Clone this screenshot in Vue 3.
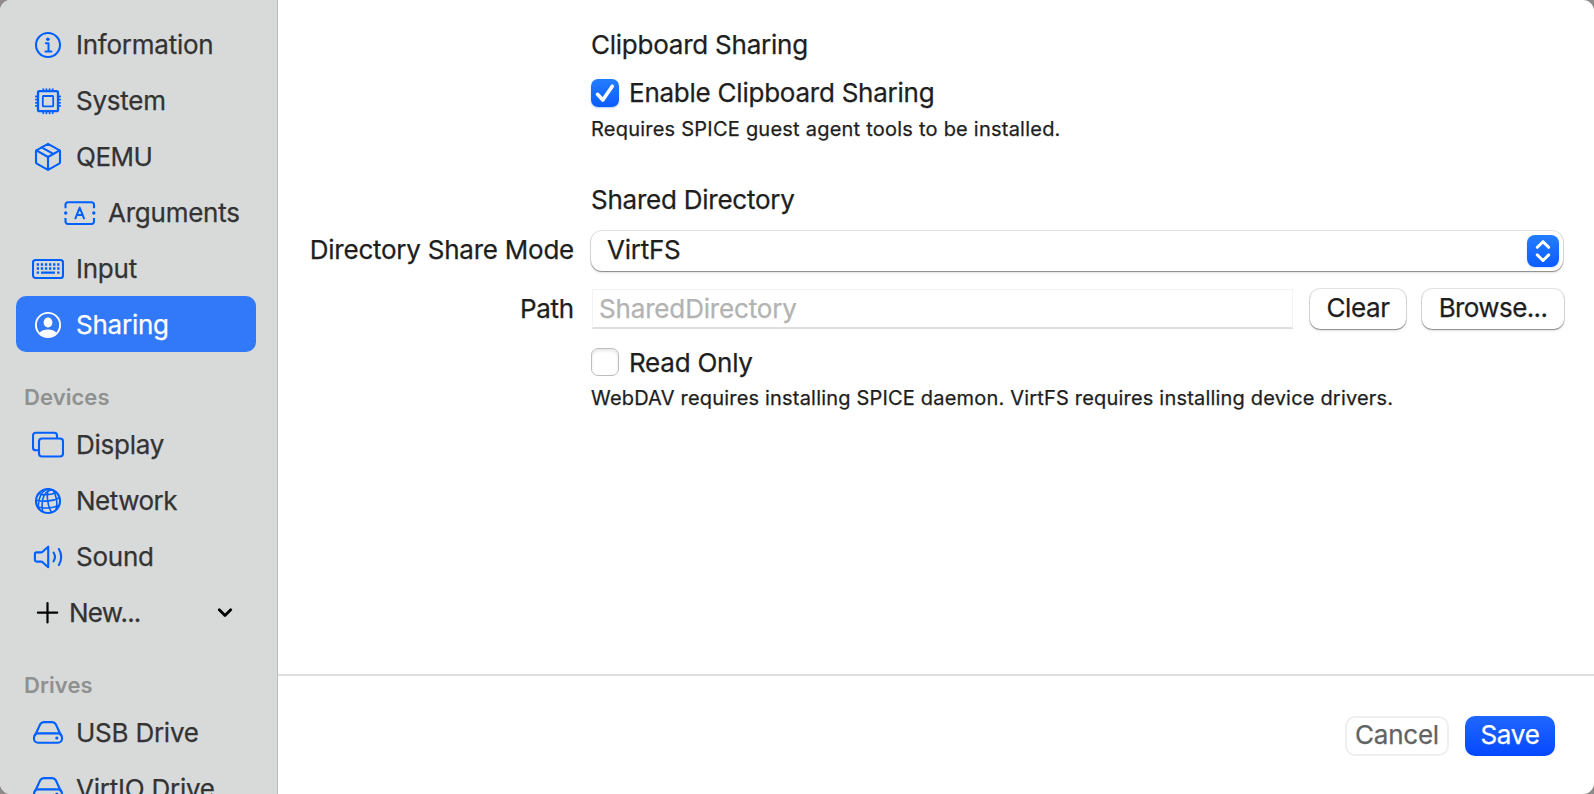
<script setup>
const main = [
  { id: 'information', label: 'Information' },
  { id: 'system', label: 'System' },
  { id: 'qemu', label: 'QEMU' },
  { id: 'arguments', label: 'Arguments', nested: true },
  { id: 'input', label: 'Input' },
  { id: 'sharing', label: 'Sharing', active: true },
]
const devices = [
  { id: 'display', label: 'Display' },
  { id: 'network', label: 'Network' },
  { id: 'sound', label: 'Sound' },
  { id: 'new', label: 'New...' },
]
const drives = [
  { id: 'usb', label: 'USB Drive' },
  { id: 'virtio', label: 'VirtIO Drive' },
]
const groups = [
  { id: 'main', items: main },
  { id: 'devices', title: 'Devices', items: devices },
  { id: 'drives', title: 'Drives', items: drives },
]
</script>

<template>
  <div class="backdrop">
    <div class="window">
      <aside class="sidebar">
        <section v-for="g in groups" :key="g.id" class="group" :class="'g-' + g.id">
          <h2 v-if="g.title" class="group-title"><span>{{ g.title }}</span></h2>
          <div
            v-for="item in g.items"
            :key="item.id"
            class="item"
            :class="{ active: item.active, nested: item.nested, add: item.id === 'new' }"
          >
            <svg class="icon" viewBox="0 0 32 32" fill="none" stroke="currentColor" stroke-width="2.1" stroke-linecap="round" stroke-linejoin="round">
              <template v-if="item.id === 'information'">
                <circle cx="16" cy="16" r="12" />
                <circle cx="15.9" cy="10.2" r="1.8" fill="currentColor" stroke="none" />
                <path d="M13.8 14.200h2.700v8M13.400 22.400h6" stroke-width="2" />
              </template>
              <template v-else-if="item.id === 'system'">
                <rect x="6" y="6.200" width="20" height="20" rx="1.500" stroke-width="2.300" />
                <rect x="10.800" y="11" width="10.400" height="10.400" rx=".6" stroke-width="1.800" />
                <path d="M11.300 6V4.100M14.400 6V4.100M17.600 6V4.100M20.700 6V4.100M11.300 26.400v1.900M14.400 26.400v1.900M17.600 26.400v1.900M20.700 26.400v1.900M6 11.500H3.900M6 14.600H3.900M6 17.800H3.900M6 20.900H3.900M26 11.500h2.100M26 14.600h2.100M26 17.800h2.100M26 20.900h2.100" stroke-width="1.800" />
              </template>
              <template v-else-if="item.id === 'qemu'">
                <path d="M16 2.900 27.200 9.100a1.200 1.200 0 0 1 .8 1.100v11.200a1.400 1.400 0 0 1-.8 1.200L16 28.900 4.800 22.600a1.400 1.400 0 0 1-.8-1.200V10.200a1.200 1.200 0 0 1 .8-1.100Z" />
                <path d="M4.800 9.600 16 16l11.200-6.400M16 16v12.500M9.600 6.400l11.700 6.500" />
              </template>
              <template v-else-if="item.id === 'arguments'">
                <path d="M1.500 11.300V7.600a2.400 2.400 0 0 1 2.400-2.400h23.700A2.400 2.400 0 0 1 30 7.600v3.700M1.500 20.900v3.700a2.400 2.400 0 0 0 2.400 2.400h23.700a2.400 2.400 0 0 0 2.400-2.400v-3.700" stroke-linecap="butt" />
                <circle cx="1.700" cy="16" r="1.700" fill="currentColor" stroke="none" />
                <circle cx="29.800" cy="16" r="1.700" fill="currentColor" stroke="none" />
                <path d="M11.400 21.400 15.700 10.600 20 21.400M13 18.100h5.400" stroke-width="2" />
              </template>
              <template v-else-if="item.id === 'input'">
                <rect x="1" y="7" width="30" height="18" rx="2.600" />
                <path d="M4.700 11.500h23.200M4.700 15.500h23.200" stroke-width="2.300" stroke-dasharray="2.300 1.800" stroke-linecap="butt" />
                <path d="M4.700 19.700h2.300M9 19.700h14M25.200 19.700h2.300" stroke-width="2.200" stroke-linecap="butt" />
              </template>
              <template v-else-if="item.id === 'sharing'">
                <circle cx="16" cy="16" r="12.100" stroke-width="1.900" />
                <ellipse cx="16" cy="13.500" rx="4.400" ry="4.900" fill="currentColor" stroke="none" />
                <path d="M7.400 23.900c1.800-2.200 5-3.400 8.600-3.400s6.800 1.200 8.600 3.400A12 12 0 0 1 7.400 23.900Z" fill="currentColor" stroke="none" />
              </template>
              <template v-else-if="item.id === 'display'">
                <path d="M7 21.300H3.700A2.700 2.700 0 0 1 1 18.600V6.400a2.700 2.700 0 0 1 2.700-2.700h18.600A2.700 2.700 0 0 1 25 6.400v2.800" stroke-linecap="butt" />
                <rect x="7" y="9.500" width="24" height="18" rx="3" />
              </template>
              <template v-else-if="item.id === 'network'">
                <circle cx="16" cy="16" r="12" />
                <path d="M6.700 8.500c4.600 2.100 12.700 1.600 17.300-1.300M4 15.200c7.600 1.700 17.500 1 23.500-2.400M5.700 22c6.300 1.500 14.700.9 20.300-1.100M20.700 4.700C13.700 5.200 8.200 12 10.700 26.700M16.600 3.900C14.700 8 14.600 19 19.400 27.200M20.900 4.800c3.800 5.500 4.600 13.700 3.300 19.200M15.700 4C10.300 6 6.300 11.800 6.300 23" stroke-width="1.600" />
              </template>
              <template v-else-if="item.id === 'sound'">
                <path d="M16.200 5.700v20.600L10.300 21a1.500 1.500 0 0 0-1-.4H4.500a1.600 1.600 0 0 1-1.600-1.600v-6a1.600 1.600 0 0 1 1.600-1.600h4.800a1.500 1.500 0 0 0 1-.4Z" />
                <path d="M21.600 11.700c1.600 2.500 1.600 6.100 0 8.600M26.900 8c2.800 4.900 2.800 11.100 0 16" />
              </template>
              <template v-else-if="item.id === 'new'">
                <path d="M15.500 6.100v19.300M5.900 15.700h19.300" stroke-width="2.200" />
              </template>
              <template v-else>
                <path d="M3.100 18.300 8.200 7.300a4 4 0 0 1 3.600-2.200h8.400a4 4 0 0 1 3.600 2.200l5.100 11" />
                <rect x="2" y="16.400" width="28" height="9.400" rx="4" />
                <circle cx="24.800" cy="21" r="1.600" fill="currentColor" stroke="none" />
              </template>
            </svg>
            <span class="label" :class="'t-' + item.id">{{ item.label }}</span>
            <svg v-if="item.id === 'new'" class="chevron" viewBox="0 0 16 10" fill="none" stroke="currentColor" stroke-width="2.800" stroke-linecap="round" stroke-linejoin="round">
              <path d="M2.300 1.800 8 7.500l5.700-5.700" />
            </svg>
          </div>
        </section>
      </aside>

      <main class="pane">
        <div class="form">
          <div class="row heading">Clipboard Sharing</div>
          <div class="row toggle">
            <span class="check on">
              <svg viewBox="0 0 28 28" fill="none" stroke="#fff" stroke-width="3.600" stroke-linecap="round" stroke-linejoin="round"><path d="M6.500 15.300 11.800 21 21.300 7.200" /></svg>
            </span>
            <span>Enable Clipboard Sharing</span>
          </div>
          <div class="row note first">Requires SPICE guest agent tools to be installed.</div>
          <div class="row heading second">Shared Directory</div>
          <div class="row mode">
            <label class="name">Directory Share Mode</label>
            <div class="select">
              <span class="value">VirtFS</span>
              <span class="stepper">
                <svg viewBox="0 0 32 32" fill="none" stroke="#fff" stroke-width="3" stroke-linecap="round" stroke-linejoin="round"><path d="M10.300 12.300 16 6.700l5.700 5.600M10.300 19.900l5.700 5.600 5.700-5.600" /></svg>
              </span>
            </div>
          </div>
          <div class="row path">
            <label class="name">Path</label>
            <div class="field">SharedDirectory</div>
            <button class="btn clear">Clear</button>
            <button class="btn browse">Browse...</button>
          </div>
          <div class="row toggle readonly">
            <span class="check"></span>
            <span class="caption">Read Only</span>
          </div>
          <div class="row note second">WebDAV requires installing SPICE daemon. VirtFS requires installing device drivers.</div>
        </div>
        <footer class="footer">
          <button class="foot cancel">Cancel</button>
          <button class="foot save">Save</button>
        </footer>
      </main>
    </div>
  </div>
</template>

<style>
body { margin: 0; overflow: hidden; }
</style>

<style scoped>
* { box-sizing: border-box; }
.backdrop {
  width: 1594px;
  height: 794px;
  background: #8f8b8b;
  overflow: hidden;
  font-family: Inter, "Liberation Sans", sans-serif;
  font-size: 26px;
  line-height: 32px;
  letter-spacing: -0.240px;
  color: #1e1e1e;
  white-space: nowrap;
  -webkit-text-stroke: 0.250px currentColor;
}
.window {
  width: 1594px;
  height: 794px;
  display: flex;
  background: #fff;
  border-radius: 11px;
  overflow: hidden;
}
.sidebar {
  width: 278px;
  height: 794px;
  flex: none;
  padding: 16px 21px 0 16px;
  background: #d8dad9;
  border-right: 1px solid #b9bbba;
  overflow: hidden;
  color: #333;
}
.group-title {
  margin: 0;
  padding: 29px 0 4px 8px;
  height: 65px;
  font-size: 22px;
  font-weight: 600;
  color: #8f9190;
  letter-spacing: 0.080px;
  -webkit-text-stroke: 0;
}
.g-drives .group-title { padding-top: 28px; height: 64px; }
.item {
  height: 56px;
  display: flex;
  align-items: center;
  padding-left: 16px;
  border-radius: 10px;
}
.g-main .item { padding-top: 2px; }
.item.nested { padding-left: 48px; }
.item.active { background: #3179f8; color: #fff; }
.icon { width: 32px; height: 32px; flex: none; color: #0060ff; margin-right: 12px; }
.active .icon { color: #fff; }
.add .icon { color: #000; margin-right: 5px; }
.t-network { letter-spacing: -0.500px; }
.t-new { letter-spacing: -0.750px; }
.t-qemu { letter-spacing: -0.500px; }
.chevron { width: 16px; height: 10px; margin-left: auto; margin-right: 23px; color: #000; }
.pane { flex: 1; display: flex; flex-direction: column; }
.form { height: 674px; padding-top: 29px; }
.row { display: flex; align-items: center; padding-left: 313px; }
.heading { height: 32px; }
.toggle { height: 28px; margin-top: 18px; gap: 10px; }
.caption { padding-top: 2px; }
.check {
  width: 28px;
  height: 28px;
  border-radius: 7px;
  background: #fff;
  border: 1px solid #bdbdbd;
  box-shadow: inset 0 2px 3px #0000001a;
}
.check.on {
  border: 0;
  background: linear-gradient(#247dff, #0a5cff);
  box-shadow: 0 1px 2px #0a60ff55;
}
.check svg { display: block; width: 28px; height: 28px; }
.note { height: 28px; font-size: 20px; letter-spacing: 0.230px; }
.note.first { margin-top: 8px; }
.heading.second { margin-top: 41px; }
.mode { height: 42px; margin-top: 14px; padding-left: 0; }
.name { width: 296px; text-align: right; flex: none; }
.mode .name, .value { padding-bottom: 2px; }
.select {
  width: 972px;
  height: 40px;
  margin: 0 0 1px 17px;
  padding: 1px 4px 0 16px;
  display: flex;
  align-items: center;
  justify-content: space-between;
  border-radius: 11px;
  background: #fff;
  box-shadow: 0 0 0 1px #0000001c, 0 1px 1px #00000055, 0 2px 3px #00000018;
}
.stepper { width: 32px; height: 32px; border-radius: 8px; background: linear-gradient(#247dff, #0a5cff); box-shadow: 0 1px 2px #0a60ff33; }
.stepper svg { display: block; width: 32px; height: 32px; }
.path { height: 42px; margin-top: 16px; padding-left: 0; }
.field {
  width: 701px;
  height: 40px;
  margin-left: 18px;
  padding: 1px 6px 0;
  display: flex;
  align-items: center;
  border: 1px solid #f3f3f3;
  border-bottom: 2px solid #dedede;
  color: #b3b3b3;
  letter-spacing: -0.160px;
}
button { font: inherit; letter-spacing: inherit; color: inherit; padding: 0 0 2px; border: 0; display: flex; align-items: center; justify-content: center; }
.btn { height: 40px; border-radius: 10px; background: #fff; box-shadow: 0 0 0 1px #0000001c, 0 1px 1px #00000055, 0 2px 3px #00000018; }
.clear { width: 96px; margin-left: 17px; letter-spacing: -0.400px; }
.browse { width: 142px; margin-left: 16px; letter-spacing: -0.600px; }
.readonly { margin-top: 18px; }
.note.second { margin-top: 8px; letter-spacing: 0.190px; }
.footer {
  flex: 1;
  border-top: 2px solid #dfdfdf;
  padding: 40px 39px 0 0;
  display: flex;
  justify-content: flex-end;
  gap: 16px;
}
.foot { height: 40px; border-radius: 10px; }
.cancel { width: 104px; background: #fff; border: 2px solid #efefef; color: #636363; }
.save { width: 90px; background: linear-gradient(#1f67ff, #0548ff); color: #fff; }
</style>
